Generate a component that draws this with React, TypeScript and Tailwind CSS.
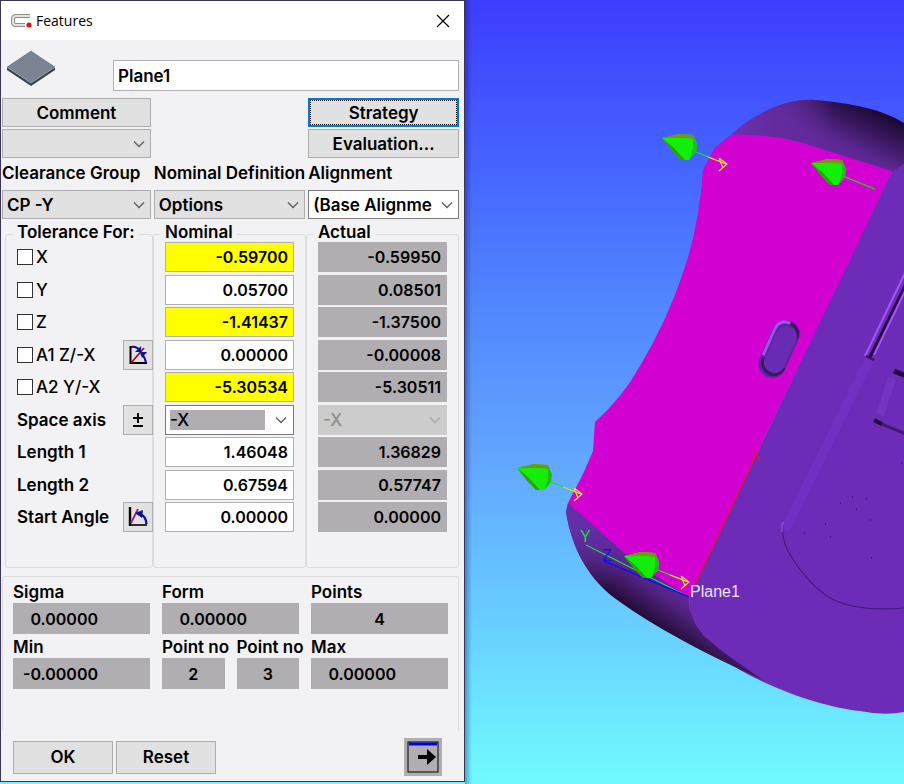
import React from "react";

const Chevron = ({ className = "text-[#606060]" }: { className?: string }) => (
  <svg
    className={`pointer-events-none absolute right-[6px] top-1/2 -translate-y-1/2 ${className}`}
    width="12"
    height="8"
    viewBox="0 0 12 8"
    fill="none"
    stroke="currentColor"
    strokeWidth="1.4"
  >
    <path d="M1 1.5 L6 6.5 L11 1.5" />
  </svg>
);

const Dropdown = ({
  label,
  value,
  white = false,
}: {
  label: string;
  value: string;
  white?: boolean;
}) => (
  <div className="relative">
    <select
      aria-label={label}
      className={`block h-[29px] w-full appearance-none border pl-1 pr-6 ${
        white ? "border-[#7a7a7a] bg-white" : "border-[#adadad] bg-[#e1e1e1]"
      }`}
    >
      <option>{value}</option>
    </select>
    <Chevron />
  </div>
);

const nominal = [
  { name: "X", value: "-0.59700", marked: true },
  { name: "Y", value: "0.05700", marked: false },
  { name: "Z", value: "-1.41437", marked: true },
  { name: "A1", value: "0.00000", marked: false },
  { name: "A2", value: "-5.30534", marked: true },
  { name: "Space axis", value: "-X", marked: false },
  { name: "Length 1", value: "1.46048", marked: false },
  { name: "Length 2", value: "0.67594", marked: false },
  { name: "Start Angle", value: "0.00000", marked: false },
];

const actual = [
  "-0.59950",
  "0.08501",
  "-1.37500",
  "-0.00008",
  "-5.30511",
  "-X",
  "1.36829",
  "0.57747",
  "0.00000",
];

const Tolerance = ({ text, children }: { text: string; children?: React.ReactNode }) => (
  <div className="flex h-[30px] items-center justify-between">
    <label className="flex items-center gap-[3px] font-medium">
      <input
        type="checkbox"
        className="h-4 w-4 appearance-none border border-[#333333] bg-white checked:bg-[#333333]"
      />
      {text}
    </label>
    {children}
  </div>
);

const Line = ({ text, children }: { text: string; children?: React.ReactNode }) => (
  <div className="flex h-[30px] items-center justify-between">
    <span>{text}</span>
    {children}
  </div>
);

const SmallButton = ({ label, children }: { label: string; children: React.ReactNode }) => (
  <button
    aria-label={label}
    className="-mr-px flex h-[30px] w-[30px] shrink-0 items-center justify-center border border-[#adadad] bg-[#e1e1e1]"
  >
    {children}
  </button>
);

const Group = ({
  title,
  className = "",
  children,
}: {
  title: string;
  className?: string;
  children: React.ReactNode;
}) => (
  <fieldset className="min-w-0 rounded-[3px] border border-[#dcdcdc] pb-[35px]">
    <legend className="ml-[7px] h-4 px-1 leading-3">{title}</legend>
    <div className={`flex h-[290px] flex-col justify-between ${className}`}>{children}</div>
  </fieldset>
);

const Result = ({
  id,
  label,
  value,
  className = "pr-[52px] text-right",
}: {
  id: string;
  label: string;
  value: string;
  className?: string;
}) => (
  <div className="min-w-0">
    <label htmlFor={id} className="block h-[21px] whitespace-nowrap leading-[21px]">
      {label}
    </label>
    <input
      id={id}
      readOnly
      value={value}
      className={`block h-[31px] w-full bg-[#b1aeb1] text-base ${className}`}
    />
  </div>
);

const Cone = ({ x, y, tail = "#d8e020", head = true }: { x: number; y: number; tail?: string; head?: boolean }) => (
  <g transform={`translate(${x} ${y})`}>
    <path d="M34 14 L64 26" stroke="#22e022" strokeWidth="1.2" />
    <path d="M46 19 L64 26" stroke={tail} strokeWidth="1.2" />
    {head && <path d="M57 20 L65 26 L57 33 M57 20 L61 30" stroke="#f5d83c" strokeWidth="1.2" fill="none" />}
    <path d="M0 0 L17 -4 L31 -3 L35 6 L34 14 L27 22 L19 22 Z" fill="#12ee08" />
    <path d="M0 0 L17 -4 L31 -3 L33 1 L22 0 Z" fill="#6f9a08" />
    <path d="M0 0 L11 14 L19 22 L23 22 L12 10 Z" fill="#2f9f10" />
    <path d="M31 -1 L35 6 L34 14 L28 21 L31 10 Z" fill="#1fbd0c" />
  </g>
);

const Viewport = () => (
  <svg
    className="min-h-[784px] min-w-0 flex-1"
    viewBox="465 0 439 784"
    preserveAspectRatio="xMinYMin slice"
    role="img"
    aria-label="Part model"
  >
    <defs>
      <linearGradient id="sky" x1="0" y1="0" x2="0" y2="1">
        <stop offset="0" stopColor="#3d3dff" />
        <stop offset="0.2" stopColor="#4562ff" />
        <stop offset="0.4" stopColor="#5288ff" />
        <stop offset="0.6" stopColor="#63a8ff" />
        <stop offset="0.8" stopColor="#68d0ff" />
        <stop offset="1" stopColor="#70fbff" />
      </linearGradient>
      <linearGradient id="edge" x1="0" y1="0" x2="1" y2="0">
        <stop offset="0" stopColor="#101050" stopOpacity="0.35" />
        <stop offset="1" stopColor="#101050" stopOpacity="0" />
      </linearGradient>
      <linearGradient id="cap" gradientUnits="userSpaceOnUse" x1="800" y1="165" x2="836" y2="92">
        <stop offset="0" stopColor="#6a2aa8" />
        <stop offset="0.45" stopColor="#5c2894" />
        <stop offset="1" stopColor="#1c0a34" />
      </linearGradient>
      <linearGradient id="capLeft" gradientUnits="userSpaceOnUse" x1="735" y1="0" x2="835" y2="0">
        <stop offset="0" stopColor="#6a30b0" />
        <stop offset="0.4" stopColor="#642b9e" />
        <stop offset="1" stopColor="#642b9e" stopOpacity="0" />
      </linearGradient>
      <linearGradient id="side" gradientUnits="userSpaceOnUse" x1="655" y1="555" x2="617" y2="610">
        <stop offset="0" stopColor="#6a2aac" />
        <stop offset="0.4" stopColor="#562488" />
        <stop offset="1" stopColor="#16061f" />
      </linearGradient>
      <linearGradient id="sideTop" gradientUnits="userSpaceOnUse" x1="575" y1="520" x2="625" y2="575">
        <stop offset="0" stopColor="#6330a8" />
        <stop offset="1" stopColor="#6330a8" stopOpacity="0" />
      </linearGradient>
    </defs>

    <rect x="465" y="0" width="2000" height="784" fill="url(#sky)" />
    <rect x="465" y="0" width="7" height="784" fill="url(#edge)" />

    {/* body */}
    <path
      d="M904 163 L892 171 L756 455 L689 597 L690 620 C700 640 720 658 740 670 C785 695 830 708 860 711 Q885 716 904 712 Z"
      fill="#6c2cb8"
    />
    <path
      d="M715 148 L731 135 C752 115 785 98 815 100 C850 103 882 109 904 123 L904 164 L892 172 L800 150 Z"
      fill="url(#cap)"
    />
    <path d="M715 148 L731 135 C752 115 785 98 815 100 L835 102 L835 155 L760 150 Z" fill="url(#capLeft)" />

    {/* lower side */}
    <path
      d="M568 503 L689 597 Q688 617 703 635 Q725 655 765 681 Q710 656 680 639 Q645 620 620 602 C590 582 572 550 566 512 Z"
      fill="url(#side)"
    />
    <path d="M568 503 L640 560 L620 602 C590 582 572 550 566 512 Z" fill="url(#sideTop)" />

    {/* measured plane */}
    <path
      d="M731 135 Q765 133 800 142 L892 171 L850 260 L756 455 L689 597 Q650 574 622 551 L568 503 L583 474 L593 451 L595 422 Q622 398 640 366 Q668 319 684 270 Q699 226 703 170 L714 149 Z"
      fill="#d200d0"
    />
    <path d="M756 455 L689 597" stroke="#f0103c" strokeWidth="1.4" />
    <path d="M752 449 L761 461 M760 449 L752 461" stroke="#f0103c" strokeWidth="1.2" />

    {/* slot */}
    <g transform="rotate(24 779 349)">
      <rect x="765" y="319" width="28" height="60" rx="14" fill="#5b2699" />
      <path d="M767 361 V333 Q767 321 779 321" stroke="#9b52ee" strokeWidth="3" fill="none" />
      <path d="M779 321 Q791 322 791 333" stroke="#3a1665" strokeWidth="3" fill="none" />
      <path d="M768 364 Q772 377 784 375 Q791 372 791 364" stroke="#3a1665" strokeWidth="3" fill="none" />
      <rect x="770" y="325" width="21" height="48" rx="9" fill="#6a2bb4" />
    </g>

    {/* grooves */}
    <path d="M870 358 L785 530" stroke="#7a38d0" strokeWidth="9" opacity="0.4" />
    <path d="M906 271 L865 356" stroke="#a254f4" strokeWidth="2" />
    <path d="M906 284 L870 357" stroke="#250b48" strokeWidth="3" />
    <path d="M906 289 L874 355" stroke="#a254f4" strokeWidth="2" />
    <path d="M866 356 L874 360" stroke="#351261" strokeWidth="2" />
    <path d="M894 371 L906 376" stroke="#24093f" strokeWidth="5" />
    <path d="M874 421 L906 434" stroke="#421a72" strokeWidth="3" />
    <path d="M874 420 L882 424" stroke="#240b42" strokeWidth="4" />
    <path d="M880 415 L892 378" stroke="#8144d4" strokeWidth="8" opacity="0.35" />
    <path d="M783 526 Q781 541 792 558 Q812 588 832 599 Q858 612 904 608" stroke="#431b79" strokeWidth="1.2" fill="none" />
    <path d="M782 532 V524 L784 522" stroke="#9651e6" strokeWidth="1.4" fill="none" />
    <path
      d="M840 503h1 M852 497h1 M866 499h1 M856 509h1 M825 524h1 M804 533h1 M870 520h1 M901 463h1 M830 537h1 M871 558h1"
      stroke="#1c0733"
      strokeWidth="1.2"
    />

    <Cone x={662} y={138} />
    <Cone x={811} y={163} tail="#22c022" head={false} />
    <Cone x={517} y={468} />

    {/* axes */}
    <path d="M586 545 L689 597" stroke="#22d84a" strokeWidth="1.3" />
    <path d="M604 561 L689 597" stroke="#1212e8" strokeWidth="1.5" />
    <Cone x={624} y={556} />
    <text x="580" y="542" fontSize="16" fill="#22d84a" fontFamily="Liberation Sans, sans-serif">
      Y
    </text>
    <text x="602" y="561" fontSize="16" fill="#1212e8" fontFamily="Liberation Sans, sans-serif">
      Z
    </text>
    <text x="690" y="597" fontSize="16" fill="#f3e4fb" fontFamily="Liberation Sans, sans-serif">
      Plane1
    </text>
  </svg>
);

const App = () => {
  return (
    <div className="flex min-h-screen bg-[#70f4ff]">
      <main className="mb-[2px] flex w-[465px] shrink-0 flex-col border border-[#3b3358] bg-[#f2f1f3] font-['Inter','Liberation_Sans',sans-serif] text-[17px] font-semibold leading-5 text-black">
        <header className="flex h-[39px] items-center bg-white pl-[10px] pr-[14px]">
          <svg width="22" height="16" viewBox="0 0 22 16" fill="none">
            <path d="M19 3 H5 Q2 3 2 6 V9 Q2 12 5 12 H14" stroke="#8c8c8c" strokeWidth="4" />
            <path d="M19 3 H5 Q2 3 2 6 V9 Q2 12 5 12 H14" stroke="#e2e2e2" strokeWidth="2" />
            <circle cx="18" cy="12" r="2.6" fill="#e81010" />
          </svg>
          <h1 className="ml-[3px] font-['Open_Sans',sans-serif] text-sm leading-4 font-normal">Features</h1>
          <button aria-label="Close" className="ml-auto">
            <svg width="14" height="14" viewBox="0 0 14 14" stroke="#000000" strokeWidth="1.2">
              <path d="M1 1 L13 13 M13 1 L1 13" />
            </svg>
          </button>
        </header>

        <div className="pl-px pr-[5px]">
          <div className="flex h-[58px] items-start">
            <svg className="ml-1 mt-2 shrink-0" width="50" height="40" viewBox="0 0 50 40">
              <path d="M1 19 L25 3 L49 19 L49 22 L25 38 L1 22 Z" fill="#38414f" />
              <path d="M1 19 L25 3 L49 19 L25 35 Z" fill="#7b8492" />
              <path d="M1 19 L25 35 L49 19" stroke="#99a1ad" fill="none" />
            </svg>
            <input
              aria-label="Feature name"
              defaultValue="Plane1"
              className="ml-[57px] mt-5 h-[31px] min-w-0 flex-1 border border-[#b0b0b0] bg-white px-1"
            />
          </div>

          <div className="grid grid-cols-[149fr_150fr_151fr] gap-x-[3px]">
            <button className="h-[29px] border border-[#adadad] bg-[#e1e1e1]">Comment</button>
            <span />
            <button className="h-[29px] border-2 border-[#0078d7] bg-[#e1e1e1] outline-1 -outline-offset-3 outline-dotted outline-black">
              Strategy
            </button>
            <div className="mt-[2px]">
              <Dropdown label="Comment list" value="" />
            </div>
            <span />
            <button className="mt-[2px] h-[29px] border border-[#adadad] bg-[#e1e1e1]">
              Evaluation...
            </button>
            <span className="whitespace-nowrap pb-[7px] pt-[5px]">Clearance Group</span>
            <span className="whitespace-nowrap pb-[7px] pt-[5px]">Nominal Definition</span>
            <span className="whitespace-nowrap pb-[7px] pt-[5px]">Alignment</span>
            <Dropdown label="Clearance Group" value="CP -Y" />
            <Dropdown label="Nominal Definition" value="Options" />
            <Dropdown label="Alignment" value="(Base Alignme" white />
          </div>
        </div>

        <div className="mt-[7px] grid grid-cols-[148fr_153fr_153fr] pl-1 pr-[5px]">
          <Group title="Tolerance For:" className="pl-[11px]">
            <Tolerance text="X" />
            <Tolerance text="Y" />
            <Tolerance text="Z" />
            <Tolerance text="A1 Z/-X">
              <SmallButton label="Angle 1">
                <svg width="20" height="20" viewBox="0 0 20 20" fill="none">
                  <path d="M2.5 1 V18 H19" stroke="#000000" strokeWidth="2" />
                  <path d="M3 18 L16 3" stroke="#a01010" strokeWidth="1.8" />
                  <path d="M3 2 Q9 1 12 6 M13 8 Q17 12 18 18" stroke="#10108c" strokeWidth="2" />
                  <path d="M13 1 V7 H7 Z M12 7 H19 L14 13 Z" fill="#10108c" />
                </svg>
              </SmallButton>
            </Tolerance>
            <Tolerance text="A2 Y/-X" />
            <Line text="Space axis">
              <SmallButton label="Reverse axis">
                <svg width="12" height="16" viewBox="0 0 12 16" stroke="#000000" strokeWidth="2">
                  <path d="M6 1 V11 M1 6 H11 M1 14 H11" />
                </svg>
              </SmallButton>
            </Line>
            <Line text="Length 1" />
            <Line text="Length 2" />
            <Line text="Start Angle">
              <SmallButton label="Start Angle">
                <svg width="20" height="20" viewBox="0 0 20 20" fill="none">
                  <path d="M2 0 V19" stroke="#000000" strokeWidth="2.4" />
                  <path d="M2 18 H19" stroke="#000000" strokeWidth="1.6" />
                  <path d="M3 16 L10 2" stroke="#a0208c" strokeWidth="1.8" />
                  <path d="M11 6 Q18 9 18.500 17" stroke="#10108c" strokeWidth="2.4" />
                  <path d="M7 6 L15 3 L14 11 Z" fill="#10108c" />
                </svg>
              </SmallButton>
            </Line>
          </Group>

          <Group title="Nominal" className="px-[11px]">
            {nominal.map((row) =>
              row.name === "Space axis" ? (
                <div key={row.name} className="relative border border-[#7a7a7a] bg-white">
                  <select
                    aria-label="Nominal Space axis"
                    className="block h-7 w-full appearance-none bg-[#b1aeb1] bg-clip-content py-1 pl-1 pr-7 font-medium leading-5"
                  >
                    <option>{row.value}</option>
                  </select>
                  <Chevron />
                </div>
              ) : (
                <input
                  key={row.name}
                  aria-label={`Nominal ${row.name}`}
                  defaultValue={row.value}
                  className={`h-[30px] w-full border border-[#b0b0b0] px-[5px] text-right text-base ${
                    row.marked ? "bg-[#ffff00]" : "bg-white"
                  }`}
                />
              )
            )}
          </Group>

          <Group title="Actual" className="px-[11px]">
            {actual.map((value, i) =>
              value === "-X" ? (
                <div key={i} className="relative">
                  <select
                    aria-label="Actual Space axis"
                    disabled
                    className="block h-[30px] w-full appearance-none bg-[#cccccc] px-[5px] font-medium text-[#8e8e8e] opacity-100"
                  >
                    <option>{value}</option>
                  </select>
                  <Chevron className="text-[#a8a8a8]" />
                </div>
              ) : (
                <input
                  key={i}
                  aria-label={`Actual ${nominal[i].name}`}
                  readOnly
                  value={value}
                  className="h-[30px] w-full bg-[#b1aeb1] px-[6px] text-right text-base"
                />
              )
            )}
          </Group>
        </div>

        <section className="ml-px mr-[5px] mt-2 h-[155px] rounded-t-[3px] border-x border-t border-[#dcdcdc] px-[10px] pt-[5px]">
          <div className="grid grid-cols-3 gap-x-3 gap-y-[3px]">
            <Result id="sigma" label="Sigma" value="0.00000" />
            <Result id="form" label="Form" value="0.00000" />
            <Result id="points" label="Points" value="4" className="text-center" />
            <Result id="min" label="Min" value="-0.00000" />
            <div className="grid grid-cols-2 gap-x-3">
              <Result id="point-min" label="Point no" value="2" className="text-center" />
              <Result id="point-max" label="Point no" value="3" className="text-center" />
            </div>
            <Result id="max" label="Max" value="0.00000" />
          </div>
        </section>

        <footer className="mt-[7px] flex items-center gap-[3px] pl-3 pr-[22px]">
          <button className="h-[33px] w-[100px] border border-[#adadad] bg-[#e1e1e1]">OK</button>
          <button className="h-[33px] w-[100px] border border-[#adadad] bg-[#e1e1e1]">Reset</button>
          <button aria-label="Next" className="ml-auto bg-[#b1aeb1] p-[3px]">
            <svg width="32" height="32" viewBox="0 0 32 32">
              <rect x="1" y="1" width="30" height="30" fill="#b1aeb1" stroke="#000000" />
              <rect x="2" y="1.500" width="28" height="3" fill="#0000ee" />
              <path d="M11 14 H20 V8 L29 16 L20 24 V18 H11 Z" fill="#000000" />
            </svg>
          </button>
        </footer>
      </main>
      <Viewport />
    </div>
  );
};

export default App;
